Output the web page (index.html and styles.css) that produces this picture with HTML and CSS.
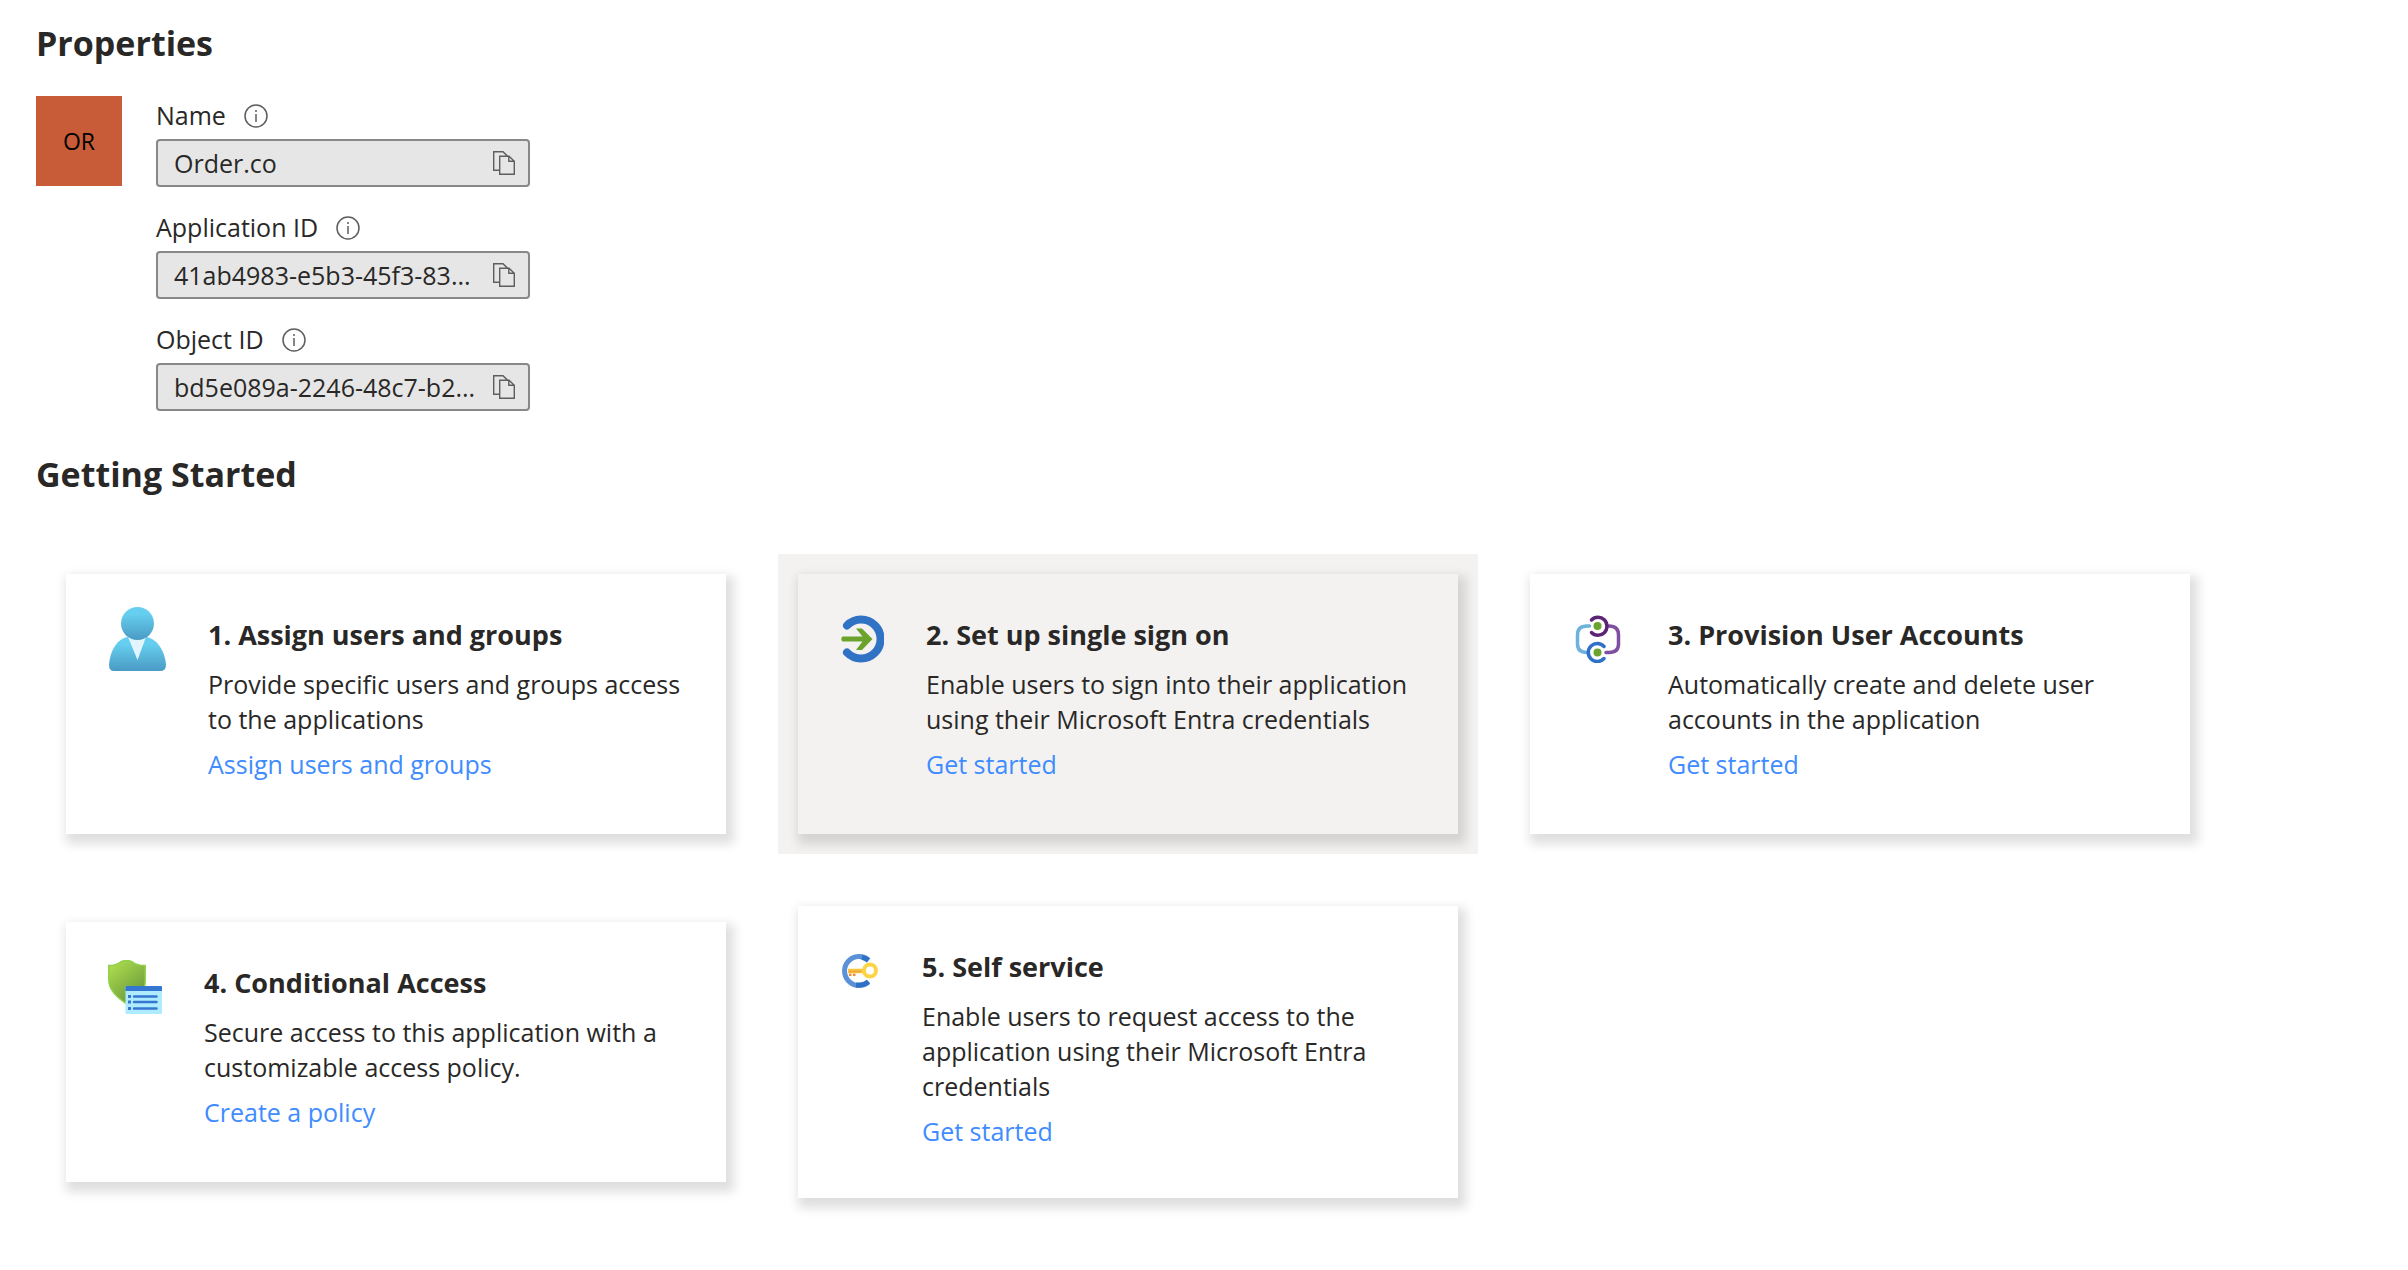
FILE: index.html
```html
<!DOCTYPE html>
<html lang="en">
<head>
    <meta charset="UTF-8">
    <meta name="viewport" content="width=device-width, initial-scale=1.0">
    <title>Order.co - Overview</title>
    <link rel="stylesheet" href="styles.css">
</head>
<body>
    <!-- Shared icons -->
    <svg class="sprite" aria-hidden="true">
        <symbol id="info" viewBox="0 0 24 24">
            <circle cx="12" cy="12" r="11" fill="none" stroke="#605e5c" stroke-width="1.5"/>
            <path d="M12 10v8M12 6v2" fill="none" stroke="#605e5c" stroke-width="1.5"/>
        </symbol>
        <symbol id="copy" viewBox="0 0 22 24">
            <path d="M6.5 19.3H.7V.7H10l4.500 4.300M10 .7l4 4" fill="none" stroke="#605e5c" stroke-width="1.4"/>
            <path d="M6.700 5.200H16l5.300 5.100V23.300H6.700zM15.800 5.200V10.300H21.300" fill="none" stroke="#605e5c" stroke-width="1.4"/>
        </symbol>
    </svg>

    <main class="page">
        <h1>Properties</h1>
        <section class="properties">
            <div class="logo">OR</div>
            <div class="fields">
                <div class="field">
                    <div class="field-label">
                        <label for="name">Name</label>
                        <svg class="info"><use href="#info"/></svg>
                    </div>
                    <div class="field-box">
                        <input type="text" id="name" value="Order.co" readonly>
                        <button type="button" aria-label="Copy name"><svg><use href="#copy"/></svg></button>
                    </div>
                </div>
                <div class="field">
                    <div class="field-label">
                        <label for="appId">Application ID</label>
                        <svg class="info"><use href="#info"/></svg>
                    </div>
                    <div class="field-box">
                        <input type="text" id="appId" value="41ab4983-e5b3-45f3-83..." readonly>
                        <button type="button" aria-label="Copy application ID"><svg><use href="#copy"/></svg></button>
                    </div>
                </div>
                <div class="field">
                    <div class="field-label">
                        <label for="objectId">Object ID</label>
                        <svg class="info"><use href="#info"/></svg>
                    </div>
                    <div class="field-box">
                        <input type="text" id="objectId" value="bd5e089a-2246-48c7-b2..." readonly>
                        <button type="button" aria-label="Copy object ID"><svg><use href="#copy"/></svg></button>
                    </div>
                </div>
            </div>
        </section>

        <h1>Getting Started</h1>
        <section class="steps">
            <div class="step">
                <div class="card">
                    <div class="icon">
                        <svg width="58" height="64" viewBox="0 0 58 64">
                            <defs>
                                <linearGradient id="body" x1="0" y1="0" x2="0" y2="1">
                                    <stop offset="0.2" stop-color="#66cfef"/>
                                    <stop offset="1" stop-color="#4a9ac4"/>
                                </linearGradient>
                            </defs>
                            <path d="M6 64Q1 64 1 58C2 43 10 31 20 30H38C48 31 57 43 58 58Q58 64 52 64Z" fill="url(#body)"/>
                            <path d="M20 30H38L29.500 53Z" fill="#e2f4fc"/>
                            <circle cx="29.500" cy="16.500" r="16.500" fill="url(#body)"/>
                        </svg>
                    </div>
                    <div class="text">
                        <h2>1. Assign users and groups</h2>
                        <p>Provide specific users and groups access to the applications</p>
                        <a href="#">Assign users and groups</a>
                    </div>
                </div>
            </div>
            <div class="step active">
                <div class="card">
                    <div class="icon">
                        <svg width="44" height="48" viewBox="0 0 44 48">
                            <path d="M7 10.500A19.500 19.500 0 1 1 7 37.500" fill="none" stroke="#3072c4" stroke-width="8" stroke-linecap="round"/>
                            <path d="M2.500 21.500H22.500L16 13.500H22L32.500 24L22 35H16L22.500 26.500H2.500Q0 24 2.500 21.500Z" fill="#6ba32c"/>
                        </svg>
                    </div>
                    <div class="text">
                        <h2>2. Set up single sign on</h2>
                        <p>Enable users to sign into their application using their Microsoft Entra credentials</p>
                        <a href="#">Get started</a>
                    </div>
                </div>
            </div>
            <div class="step">
                <div class="card">
                    <div class="icon">
                        <svg width="54" height="48" viewBox="0 0 54 48" fill="none" stroke-linecap="round">
                            <path d="M17.500 11H15Q5.500 11 5.500 20V29Q5.500 37.500 15 37.500" stroke="#6cb2dc" stroke-width="3.500"/>
                            <path d="M37 11Q46.500 11 46.500 20V29Q46.500 37.500 37 37.500H34" stroke="#7f4fa0" stroke-width="3.500"/>
                            <path d="M19.500 5A9 9 0 1 1 19.500 17.500" stroke="#5c2376" stroke-width="3.500"/>
                            <path d="M32 31.500A9 9 0 1 0 32 43.500" stroke="#2f71c8" stroke-width="3.500"/>
                            <circle cx="25.500" cy="11" r="4" fill="#6ba32c"/>
                            <circle cx="25.500" cy="37.500" r="4" fill="#6ba32c"/>
                        </svg>
                    </div>
                    <div class="text">
                        <h2>3. Provision User Accounts</h2>
                        <p>Automatically create and delete user accounts in the application</p>
                        <a href="#">Get started</a>
                    </div>
                </div>
            </div>
            <div class="step">
                <div class="card">
                    <div class="icon">
                        <svg width="54" height="54" viewBox="0 0 54 54">
                            <defs>
                                <linearGradient id="shield" x1="0" y1="0" x2="0.700" y2="1">
                                    <stop offset="0" stop-color="#b4e150"/>
                                    <stop offset="1" stop-color="#67993a"/>
                                </linearGradient>
                            </defs>
                            <path d="M.8 5.500Q8 5.500 12.500 2Q18.500-1 24.500 2Q29 5.500 37.200 5.500V22C37 34 27 38 19 44C8 37 .8 30 .8 20Z" fill="url(#shield)" stroke="#8fd048" stroke-width="1.500"/>
                            <rect x="17.500" y="26" width="36.500" height="28" rx="1" fill="#aeebff"/>
                            <path d="M17.500 31V27Q17.500 26 18.500 26H53Q54 26 54 27V31Z" fill="#3577d0"/>
                            <path d="M26 36.500H48.500M26 42H48.500M26 48.500H48.500" stroke="#3577d0" stroke-width="2.500" stroke-linecap="round"/>
                            <path d="M20 36.500H23M20 42H23M20 48.500H23" stroke="#3577d0" stroke-width="3"/>
                        </svg>
                    </div>
                    <div class="text">
                        <h2>4. Conditional Access</h2>
                        <p>Secure access to this application with a customizable access policy.</p>
                        <a href="#">Create a policy</a>
                    </div>
                </div>
            </div>
            <div class="step">
                <div class="card">
                    <div class="icon">
                        <svg width="40" height="34" viewBox="1 0 40 34" fill="none">
                            <path d="M29.500 6A14.500 14.500 0 1 0 29.500 28" stroke="#5b91d6" stroke-width="5"/>
                            <path d="M23 3.200Q26.500 4 29.500 6.500M17 31Q25 31.500 29.500 27.500" stroke="#2f71c4" stroke-width="5"/>
                            <path d="M10 19.500H12.500V22H10ZM14 19.500H16.500V22H14Z" fill="#f08b3c"/>
                            <path d="M9 17H26" stroke="#f8c53c" stroke-width="4.500"/>
                            <path d="M10 17.500H22" stroke="#f0a338" stroke-width="1.500"/>
                            <circle cx="31" cy="16.500" r="6" stroke="#f9d547" stroke-width="4"/>
                        </svg>
                    </div>
                    <div class="text">
                        <h2>5. Self service</h2>
                        <p>Enable users to request access to the application using their Microsoft Entra credentials</p>
                        <a href="#">Get started</a>
                    </div>
                </div>
            </div>
        </section>
    </main>
</body>
</html>
```

FILE: styles.css
```css
* {
    margin: 0;
    padding: 0;
    box-sizing: border-box;
}

body {
    background-color: #fff;
    color: #292827;
    font-family: 'Segoe UI', 'Open Sans', 'Noto Sans', sans-serif;
    font-size: 25px;
    line-height: 35px;
}

.sprite {
    display: none;
}

.page {
    padding: 18px 36px;
}

h1 {
    font-size: 34px;
    line-height: 50px;
}

/* Properties */
.properties {
    display: flex;
    align-items: flex-start;
    gap: 34px;
    margin: 28px 0 38px;
}

.logo {
    display: flex;
    align-items: center;
    justify-content: center;
    width: 86px;
    height: 90px;
    background-color: #c95c38;
    color: #000;
    font-size: 23px;
}

.fields {
    display: flex;
    flex-direction: column;
    gap: 22px;
    width: 100%;
    max-width: 374px;
    padding-top: 1px;
}

.field-label {
    display: flex;
    align-items: center;
    gap: 18px;
    height: 37px;
    margin-bottom: 5px;
}

.info {
    width: 24px;
    height: 24px;
}

.field-box {
    display: flex;
    align-items: center;
    height: 48px;
    padding: 0 13px 0 16px;
    background-color: #e6e6e6;
    border: 2px solid #8a8886;
    border-radius: 4px;
}

.field-box input {
    flex: 1;
    min-width: 0;
    height: 35px;
    background: none;
    border: none;
    color: inherit;
    font: inherit;
    text-overflow: ellipsis;
}

.field-box button {
    display: flex;
    background: none;
    border: none;
    cursor: pointer;
}

.field-box button svg {
    width: 22px;
    height: 24px;
}

/* Getting started cards */
.steps {
    display: grid;
    grid-template-columns: repeat(3, minmax(0, 700px));
    align-items: center;
    gap: 32px;
    margin: 55px 10px 0;
}

.step {
    padding: 20px;
}

.card {
    display: flex;
    gap: 42px;
    min-height: 260px;
    padding: 43px 42px 49px;
    background-color: #fff;
    box-shadow: 4px 6px 10px 4px rgba(0, 0, 0, 0.13);
}

.active,
.active .card {
    background-color: #f3f2f0;
}

.icon {
    display: flex;
    align-items: center;
    flex-shrink: 0;
    height: 44px;
}

.text {
    max-width: 490px;
}

h2 {
    margin-bottom: 15px;
    font-size: 27px;
    line-height: 35px;
}

p {
    margin-bottom: 10px;
}

a {
    color: #3f8cff;
    text-decoration: none;
}

a:hover {
    text-decoration: underline;
}
```
